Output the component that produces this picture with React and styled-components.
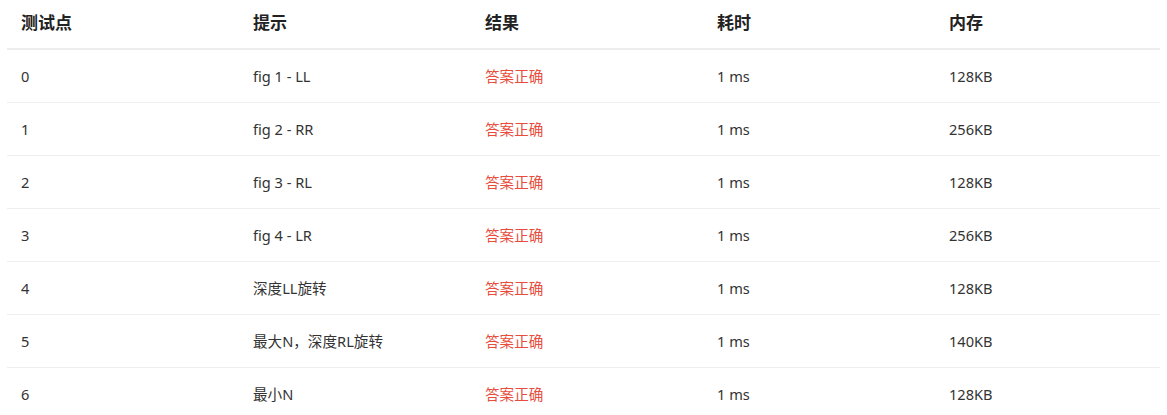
import React from "react";
import styled, { createGlobalStyle } from "styled-components";

const GlobalStyle = createGlobalStyle`
  body {
    margin: 0;
    background: #fff;
    font-family: "Noto Sans", "Noto Sans CJK SC", sans-serif;
  }
`;

const Wrapper = styled.div`
  padding: 0 7px;
`;

const Table = styled.table`
  width: 1153px;
  border-collapse: collapse;
  table-layout: fixed;
`;

const HeadCell = styled.th`
  text-align: left;
  height: 42px;
  padding: 0 14px 6px;
  font-size: 17px;
  font-weight: 700;
  color: #222;
  border-bottom: 2px solid #ededed;
`;

const Row = styled.tr`
  height: 53px;
  border-bottom: 1px solid #eeeeee;
`;

const Cell = styled.td`
  padding: 0 14px;
  font-size: 14.6px;
  color: ${p => (p.status ? "#e74c3c" : "#333")};
`;

const data = [
  { id: 0, hint: "fig 1 - LL", time: "1 ms", mem: "128KB" },
  { id: 1, hint: "fig 2 - RR", time: "1 ms", mem: "256KB" },
  { id: 2, hint: "fig 3 - RL", time: "1 ms", mem: "128KB" },
  { id: 3, hint: "fig 4 - LR", time: "1 ms", mem: "256KB" },
  { id: 4, hint: "深度LL旋转", time: "1 ms", mem: "128KB" },
  { id: 5, hint: "最大N，深度RL旋转", time: "1 ms", mem: "140KB" },
  { id: 6, hint: "最小N", time: "1 ms", mem: "128KB" }
];

const App = () => {
  return (
    <Wrapper>
      <GlobalStyle />
      <Table>
        <colgroup>
          <col style={{ width: 232 }} />
          <col style={{ width: 232 }} />
          <col style={{ width: 232 }} />
          <col style={{ width: 232 }} />
          <col />
        </colgroup>
        <thead>
          <tr>
            <HeadCell>测试点</HeadCell>
            <HeadCell>提示</HeadCell>
            <HeadCell>结果</HeadCell>
            <HeadCell>耗时</HeadCell>
            <HeadCell>内存</HeadCell>
          </tr>
        </thead>
        <tbody>
          {data.map(row => (
            <Row key={row.id}>
              <Cell>{row.id}</Cell>
              <Cell>{row.hint}</Cell>
              <Cell status>答案正确</Cell>
              <Cell>{row.time}</Cell>
              <Cell>{row.mem}</Cell>
            </Row>
          ))}
        </tbody>
      </Table>
    </Wrapper>
  );
};

export default App;
